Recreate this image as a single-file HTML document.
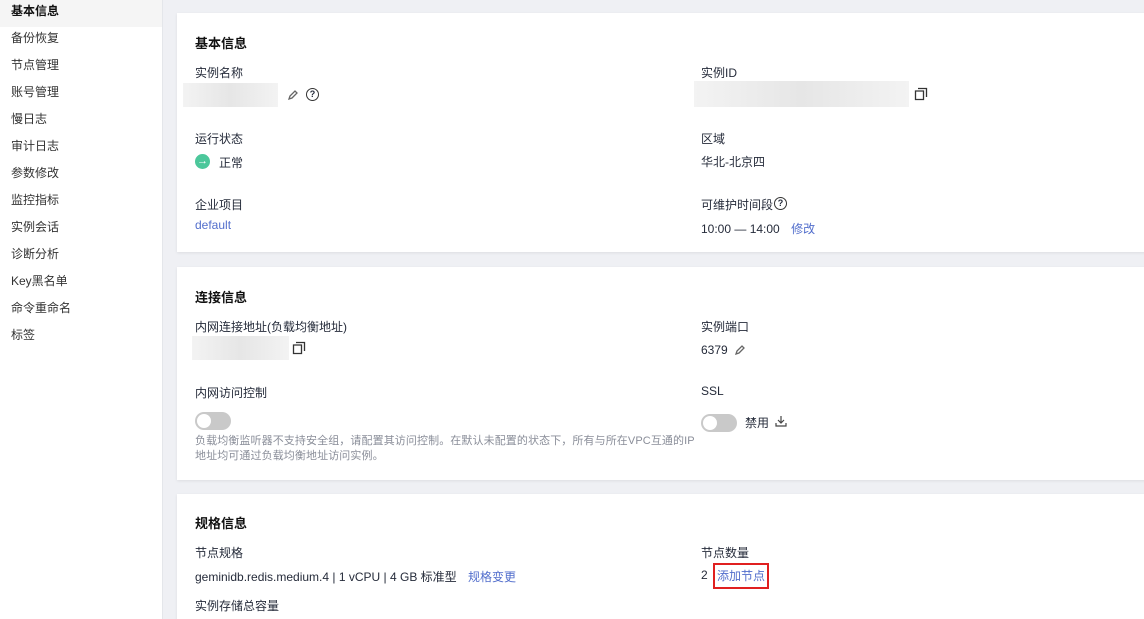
<!DOCTYPE html>
<html><head><meta charset="utf-8"><style>
*{margin:0;padding:0;box-sizing:border-box}
html,body{width:1144px;height:619px;overflow:hidden}
body{background:#eff0f4;font-family:"Liberation Sans","Noto Sans CJK SC",sans-serif;font-size:12px;color:#252b3a;position:relative}
.side{position:absolute;left:0;top:0;width:163px;height:619px;background:#fff;border-right:1px solid #e4e6ea}
.side div{height:27px;line-height:22px;padding-left:11px;color:#333}
.side div.act{background:#f5f5f5;font-weight:bold;color:#111}
.card{position:absolute;left:177px;width:980px;background:#fff;box-shadow:0 1px 3px rgba(0,0,0,.08)}
.a{position:absolute;white-space:nowrap}
.h{font-size:13px;font-weight:bold;color:#111}
.lnk{color:#526ecc}
.blur{position:absolute;background:linear-gradient(90deg,#f3f3f3,#e6e6e6,#f3f3f3)}
.sw{position:absolute;width:36px;height:18px;border-radius:9px;background:#c9c9c9}
.sw:after{content:"";position:absolute;left:2px;top:2px;width:14px;height:14px;border-radius:50%;background:#fff}
.g{color:#8a8e99}
</style></head><body>
<div class="side">
<div class="act">基本信息</div><div>备份恢复</div><div>节点管理</div><div>账号管理</div><div>慢日志</div><div>审计日志</div><div>参数修改</div><div>监控指标</div><div>实例会话</div><div>诊断分析</div><div>Key黑名单</div><div>命令重命名</div><div>标签</div>
</div>

<div class="card" style="top:13px;height:239px">
<div class="a h" style="left:18px;top:20px">基本信息</div>
<div class="a" style="left:18px;top:51px">实例名称</div>
<div class="blur" style="left:6px;top:70px;width:95px;height:24px"></div>
<svg class="a" style="left:110px;top:76px" width="12" height="12" viewBox="0 0 12 12"><path d="M2 10l1-3 5-5 2 2-5 5z" fill="none" stroke="#666" stroke-width="1.3"/></svg>
<div class="a" style="left:129px;top:75px;width:13px;height:13px;border:1.3px solid #333;border-radius:50%;font-size:9px;line-height:11px;text-align:center;font-weight:bold">?</div>
<div class="a" style="left:18px;top:117px">运行状态</div>
<div class="a" style="left:18px;top:141px;width:15px;height:15px;border-radius:50%;background:#4cc79b;color:#fff;font-size:11px;line-height:15px;text-align:center;font-weight:bold">→</div>
<div class="a" style="left:42px;top:141px">正常</div>
<div class="a" style="left:18px;top:183px">企业项目</div>
<div class="a lnk" style="left:18px;top:205px">default</div>
<div class="a" style="left:524px;top:51px">实例ID</div>
<div class="blur" style="left:517px;top:68px;width:215px;height:26px"></div>
<svg class="a" style="left:737px;top:74px" width="14" height="14" viewBox="0 0 14 14"><path d="M4 1.5h8.5v8.5M1.5 4h8v8.5h-8z" fill="none" stroke="#333" stroke-width="1.3"/></svg>
<div class="a" style="left:524px;top:117px">区域</div>
<div class="a" style="left:524px;top:140px">华北-北京四</div>
<div class="a" style="left:524px;top:183px">可维护时间段</div>
<div class="a" style="left:597px;top:184px;width:13px;height:13px;border:1.3px solid #333;border-radius:50%;font-size:9px;line-height:11px;text-align:center;font-weight:bold">?</div>
<div class="a" style="left:524px;top:207px">10:00 — 14:00 <span class="lnk" style="margin-left:8px">修改</span></div>
</div>

<div class="card" style="top:267px;height:213px">
<div class="a h" style="left:18px;top:20px">连接信息</div>
<div class="a" style="left:18px;top:51px">内网连接地址(负载均衡地址)</div>
<div class="blur" style="left:15px;top:69px;width:97px;height:24px"></div>
<svg class="a" style="left:115px;top:74px" width="14" height="14" viewBox="0 0 14 14"><path d="M4 1.5h8.5v8.5M1.5 4h8v8.5h-8z" fill="none" stroke="#333" stroke-width="1.3"/></svg>
<div class="a" style="left:524px;top:51px">实例端口</div>
<div class="a" style="left:524px;top:76px">6379</div>
<svg class="a" style="left:557px;top:77px" width="12" height="12" viewBox="0 0 12 12"><path d="M2 10l1-3 5-5 2 2-5 5z" fill="none" stroke="#666" stroke-width="1.3"/></svg>
<div class="a" style="left:18px;top:117px">内网访问控制</div>
<div class="sw" style="left:18px;top:145px"></div>
<div class="a g" style="left:18px;top:167px;line-height:15px;white-space:normal;width:500px;font-size:11px;letter-spacing:0.1px">负载均衡监听器不支持安全组，请配置其访问控制。在默认未配置的状态下，所有与所在VPC互通的IP地址均可通过负载均衡地址访问实例。</div>
<div class="a" style="left:524px;top:117px">SSL</div>
<div class="sw" style="left:524px;top:147px"></div>
<div class="a" style="left:568px;top:147px">禁用</div>
<svg class="a" style="left:598px;top:148px" width="12" height="12" viewBox="0 0 12 12"><path d="M6 1v7M3 5l3 3 3-3M1 8v3h10V8" fill="none" stroke="#444" stroke-width="1.2"/></svg>
</div>

<div class="card" style="top:494px;height:130px">
<div class="a h" style="left:18px;top:19px">规格信息</div>
<div class="a" style="left:18px;top:50px">节点规格</div>
<div class="a" style="left:18px;top:74px">geminidb.redis.medium.4 | 1 vCPU | 4 GB 标准型 <span class="lnk" style="margin-left:8px">规格变更</span></div>
<div class="a" style="left:18px;top:103px">实例存储总容量</div>
<div class="a" style="left:524px;top:50px">节点数量</div>
<div class="a" style="left:524px;top:74px">2</div>
<div class="a lnk" style="left:536px;top:69px;width:56px;height:26px;border:2px solid #e02020;line-height:22px;text-align:center">添加节点</div>
</div>
</body></html>
